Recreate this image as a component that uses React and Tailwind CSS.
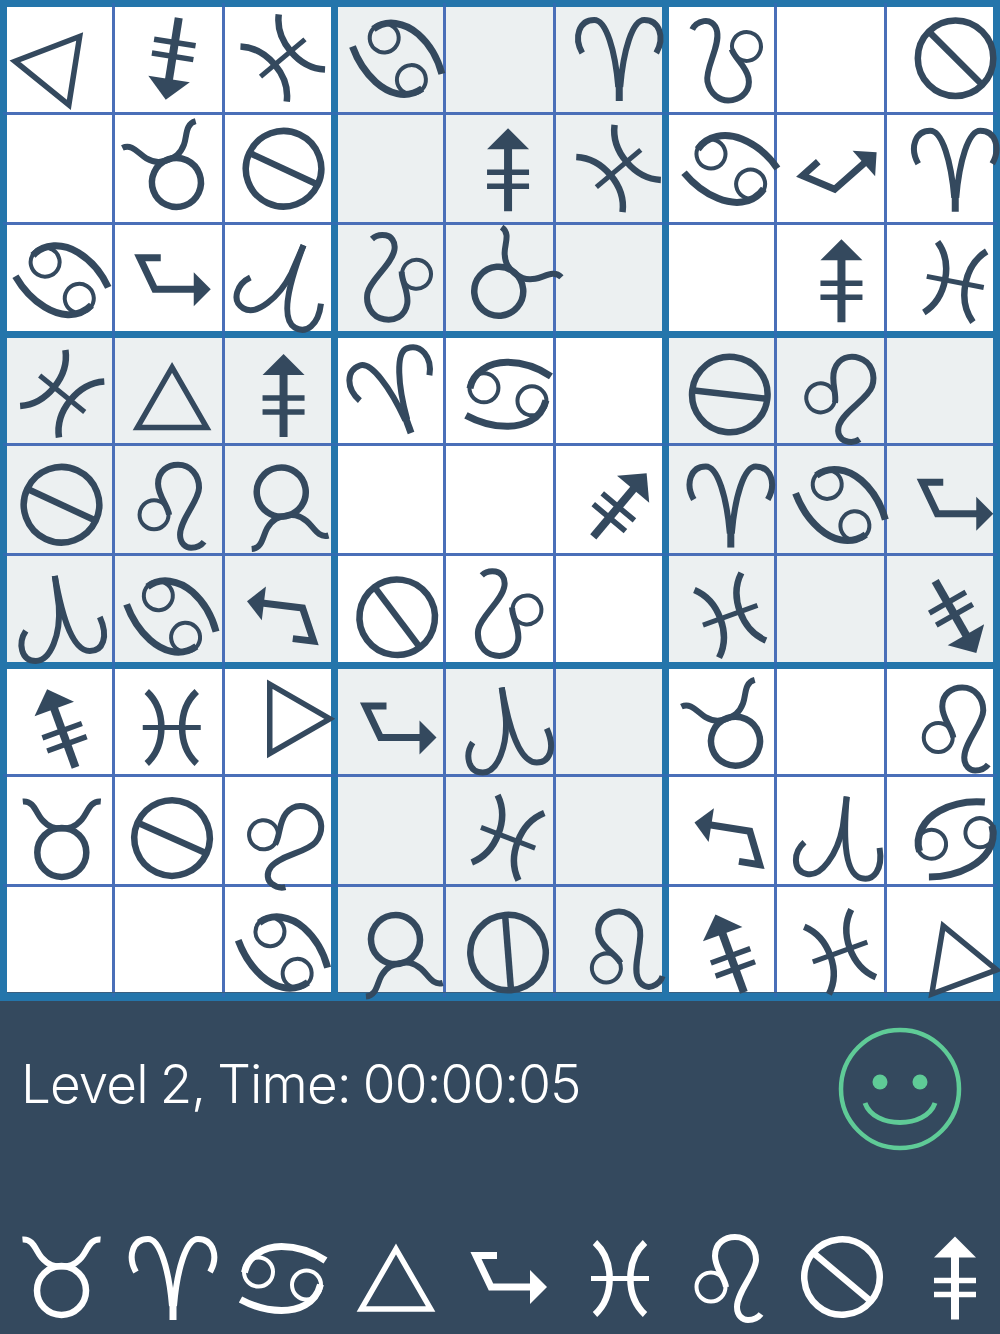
// pieces: [symbol, page x, page y, rotation], null for an empty cell
const BOARD = [
  [['tri', 54, 67, -81], ['arrow', 172.5, 58.3, 189], ['pisces', 282.5, 57.5, -40], ['cancer', 397.3, 58.3, 41.7], null, ['aries', 619, 58.5, 0], ['leo', 731, 58, 169], null, ['ban', 955.3, 57.7, 45]],
  [null, ['taurus', 176.7, 182.7, -20], ['ban', 283.3, 169, 25], null, ['arrow', 508.3, 170, 0], ['pisces', 618.3, 168.7, -40], ['cancer', 730.3, 169.3, 22], ['bent', 843, 173, -41.5], ['aries', 955, 170, 0]],
  [['cancer', 61.7, 280, 31.5], ['bent', 172, 282, 0], ['cap', 289.7, 287, 31], ['leo', 397.7, 279.9, 190], ['taurus', 499, 291, 40], null, null, ['arrow', 841.7, 280.5, 0], ['pisces', 955, 281.7, 11]],
  [['pisces', 61.7, 393.3, 39], ['tri', 172.3, 406.9, 0], ['arrow', 283.3, 395, 0], ['aries', 396.2, 393.1, -20], ['cancer', 508.2, 393.8, 0], null, ['ban', 729.3, 394, 6.5], ['leo', 840, 394.2, 18.5], null],
  [['ban', 61, 505, 25], ['leo', 171.3, 506, 0], ['taurus', 281, 492.3, 170], null, null, ['arrow', 619.7, 505.3, 40], ['aries', 730.3, 505.8, 0], ['cancer', 841.3, 505.3, 41], ['bent', 954, 507, 0]],
  [['cap', 64.3, 618.7, 0], ['cancer', 172.2, 616.3, 41.6], ['bent', 284.6, 612.7, 187], ['ban', 396.7, 617, 53], ['leo', 509, 615.9, 189], null, ['pisces', 729.7, 615, -20], null, ['arrow', 955.5, 616.7, 150.3]],
  [['arrow', 60.8, 727.8, -20], ['pisces', 172, 727, 0], ['tri', 289.5, 718.3, 90], ['bent', 397, 730, 0], ['cap', 512, 730, 0], null, ['taurus', 735, 740.7, -20], null, ['leo', 955, 728, 0]],
  [['taurus', 61.3, 852.7, 0], ['ban', 172.3, 838.3, 24], ['leo', 282.2, 838.7, 39], null, ['pisces', 508.3, 838, 21], null, ['bent', 731.4, 835.7, 189], ['cap', 845.5, 841, 15], ['cancer', 955.5, 838.7, -28.6]],
  [null, null, ['cancer', 283.3, 952.3, 41.7], ['taurus', 395, 939.3, 170], ['ban', 508.3, 952.3, 85.5], ['leo', 619, 953.4, -20], ['arrow', 729.2, 953.2, -20], ['pisces', 840.3, 951.7, -20], ['tri', 957, 963, 99.5]],
]

// cell centres, same on both axes
const CENTERS = [59.5, 168.25, 277.75, 390.5, 499.25, 608.75, 721.5, 830.25, 939.75]

// dx, dy are offsets from the slot centre
const TRAY = [
  ['taurus', 5.5, 12.5, 0],
  ['aries', 6, 0, 0],
  ['cancer', 4.5, 0.5, 0],
  ['tri', 7, 11, 0],
  ['bent', 8, 2, 0],
  ['pisces', 9, 0.5, 0],
  ['leo', 6, 0, 0],
  ['ban', 9, -1, 40],
  ['arrow', 11, 0, 0],
]

const STUBS = [
  'left-[105px] -top-1 w-[2.5px] h-1',
  'left-[215px] -top-1 w-[2.5px] h-1',
  'left-[105px] -bottom-1 w-[2.5px] h-1',
  'left-[215px] -bottom-1 w-[2.5px] h-1',
  'top-[105px] -left-1 h-[2.5px] w-1',
  'top-[215px] -left-1 h-[2.5px] w-1',
  'top-[105px] -right-1 h-[2.5px] w-1',
  'top-[215px] -right-1 h-[2.5px] w-1',
]

function Symbol({ name, color }) {
  const line = { fill: 'none', stroke: color }
  if (name === 'tri') {
    return <polygon points="0,-40 34.6,20 -34.6,20" {...line} strokeWidth="5.5" />
  }
  if (name === 'arrow') {
    return (
      <g>
        <path d="M0 41.5V-22" {...line} strokeWidth="8" />
        <path d="M-21 2.5H21M-21 16.5H21" {...line} strokeWidth="5.5" />
        <polygon points="0,-41.5 21,-20.5 -21,-20.5" fill={color} />
      </g>
    )
  }
  if (name === 'pisces') {
    return (
      <g {...line}>
        <path d="M-25 -36C-5.5 -18 -5.5 18 -25 36M25 -36C5.5 -18 5.5 18 25 36" strokeWidth="6.5" />
        <path d="M-29 0H29" strokeWidth="5" />
      </g>
    )
  }
  if (name === 'cancer') {
    return (
      <g {...line}>
        <circle cx="-24" cy="-6.5" r="14.5" strokeWidth="4" />
        <circle cx="24" cy="6.5" r="14.5" strokeWidth="4" />
        <path d="M-38 -6C-35 -22 -19 -32 -1 -32C15 -32 31 -26 43 -18" strokeWidth="7" />
        <path d="M-42 21C-29 28 -15 32 -1 32C15 32 33 26 38 6" strokeWidth="7" />
      </g>
    )
  }
  if (name === 'taurus') {
    return (
      <g {...line} strokeWidth="6.5">
        <circle r="24.5" />
        <path d="M-39 -51C-28 -52 -26 -40 -20 -33C-13 -25 -7 -24 0 -24C7 -24 13 -25 20 -33C26 -40 28 -52 39 -51" strokeWidth="6" />
      </g>
    )
  }
  if (name === 'ban') {
    return (
      <g {...line}>
        <circle r="37.75" strokeWidth="6.5" />
        <path d="M-38 0H38" strokeWidth="6.5" />
      </g>
    )
  }
  if (name === 'bent') {
    return (
      <g>
        <path d="M-11 -24.5H-32L-17 7H24" {...line} strokeWidth="7" />
        <polygon points="22,-10 39,7 22,24" fill={color} />
      </g>
    )
  }
  if (name === 'aries') {
    return (
      <g {...line} strokeWidth="6">
        <path d="M-37 -6C-46 -22 -40 -39 -25 -39C-13 -39 -4 -8 -1 28M37 -6C46 -22 40 -39 25 -39C13 -39 4 -8 1 28" />
        <path d="M0 22V42" strokeWidth="7" />
      </g>
    )
  }
  if (name === 'leo') {
    return (
      <g {...line}>
        <circle cx="-17" cy="9" r="14.5" strokeWidth="4" />
        <path d="M-2 9C-3 0 -13 -10 -13 -22C-13 -35 -3 -41 7 -41C20 -41 28 -30 28 -18C28 -5 9 14 9 29C9 38 15 42 20 42C25 42 30 40 33 36" strokeWidth="6" />
      </g>
    )
  }
  return (
    <g {...line} strokeWidth="6">
      <path d="M-39 12C-47 24 -44 42 -29 42C-14 42 -4 15 -6 -13L-10 -43" />
      <path d="M-10 -43C-5 -15 5 32 25 32C38 32 44 18 35 -2" />
    </g>
  )
}

function Glyph({ name, dx, dy, rot, color }) {
  return (
    <svg viewBox="-53 -53 106 106" className="relative z-10 w-[106px] h-[106px] shrink-0 overflow-visible">
      <g transform={`translate(${dx} ${dy}) rotate(${rot})`}>
        <Symbol name={name} color={color} />
      </g>
    </svg>
  )
}

function Box({ row, col }) {
  const shaded = (row + col) % 2 === 1
  const cells = []
  for (let r = row * 3; r < row * 3 + 3; r++) {
    for (let c = col * 3; c < col * 3 + 3; c++) {
      const piece = BOARD[r][c]
      cells.push(
        <div key={c} className={`flex items-center justify-center ${shaded ? 'bg-[#ecf0f1]' : 'bg-white'}`}>
          {piece && (
            <Glyph
              name={piece[0]}
              dx={piece[1] - CENTERS[c]}
              dy={piece[2] - CENTERS[r]}
              rot={piece[3]}
              color="#34495e"
            />
          )}
        </div>
      )
    }
  }
  return (
    <div className="relative grid grid-cols-[105px_107.5px_106.5px] grid-rows-[105px_107.5px_106.5px] gap-[2.5px] bg-[#4a6fb8]">
      {cells}
      {STUBS.map((s) => (
        <div key={s} className={`absolute bg-[#2f6db2] ${s}`} />
      ))}
      {row === 2 && <div className="absolute left-0 right-0 bottom-0 h-[1.5px] bg-[#3a5f80]" />}
    </div>
  )
}

function Smile() {
  return (
    <svg viewBox="0 0 124 124" className="w-[124px] h-[124px] shrink-0">
      <circle cx="62" cy="62" r="59" fill="none" stroke="#5fcb97" strokeWidth="4.5" />
      <ellipse cx="42" cy="55" rx="7.5" ry="7.5" fill="#5fcb97" />
      <ellipse cx="82" cy="55" rx="7.5" ry="7.5" fill="#5fcb97" />
      <path d="M27 76C36 102 88 102 97 76" fill="none" stroke="#5fcb97" strokeWidth="5" />
    </svg>
  )
}

export default function App() {
  return (
    <div className="w-[1000px] h-[1334px] overflow-hidden bg-[#34495e]">
      {/* Board */}
      <div className="grid grid-cols-3 gap-[7px] w-[1000px] h-[1001px] pt-[7px] pb-[8px] px-[7px] bg-[#2475ab]">
        {[0, 1, 2].map((row) => [0, 1, 2].map((col) => <Box key={`${row}-${col}`} row={row} col={col} />))}
      </div>

      {/* Status */}
      <div className="flex flex-col h-[333px]">
        <div className="flex items-start justify-between pt-[26px] pl-[21px] pr-[38px] h-[221px]">
          <div className="mt-[27px] text-white text-[53px] leading-[60px] font-light tracking-[-0.9px] [word-spacing:-2px] whitespace-nowrap font-['Inter',sans-serif]">
            Level 2, Time: 00:00:05
          </div>
          <Smile />
        </div>

        {/* Tray */}
        <div className="grid grid-cols-9 h-[112px]">
          {TRAY.map((t) => (
            <div key={t[0]} className="flex items-center justify-center">
              <Glyph name={t[0]} dx={t[1]} dy={t[2]} rot={t[3]} color="#ffffff" />
            </div>
          ))}
        </div>
      </div>
    </div>
  )
}
